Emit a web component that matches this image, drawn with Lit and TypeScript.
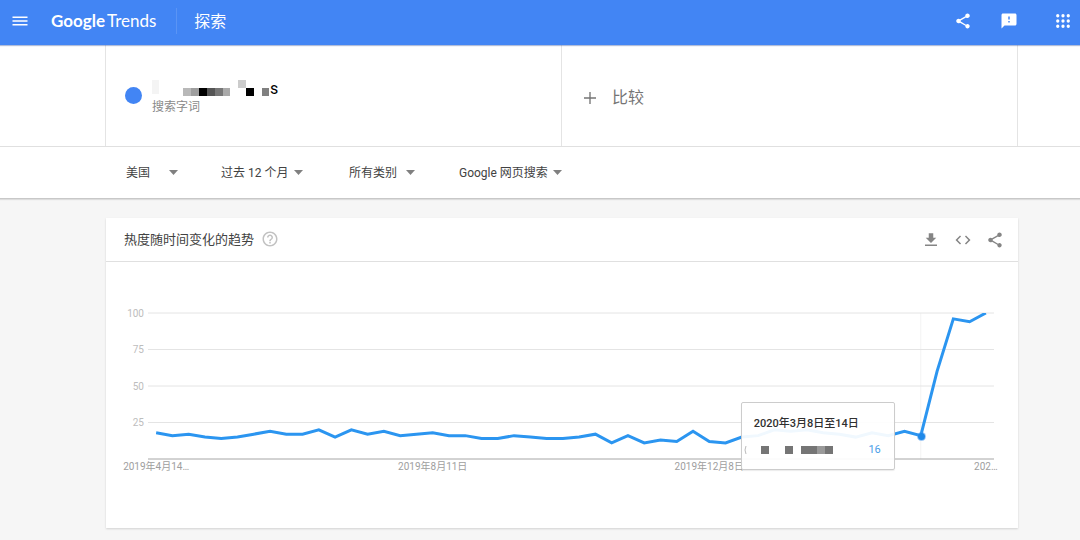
import { LitElement, html, svg, css } from "lit";
import { customElement, property, state } from "lit/decorators.js";

const VALUES = [
  18, 16, 17, 15, 14, 15, 17, 19, 17, 17, 20, 15, 20, 17, 19, 16, 17, 18, 16, 16, 14, 14, 16, 15, 14, 14,
  15, 17, 11, 16, 11, 13, 12, 19, 12, 11, 15, 16, 20, 19, 20, 18, 17, 15, 18, 16, 19, 16, 60, 96, 94, 100,
];

const TICKS = [
  { week: 0, text: "2019年4月14…" },
  { week: 17, text: "2019年8月11日" },
  { week: 34, text: "2019年12月8日" },
  { week: 51, text: "202…" },
];

const FILTERS = [
  { id: "geo", name: "地区", options: ["美国", "全球"], size: "short" },
  { id: "time", name: "时间范围", options: ["过去 12 个月", "过去 5 年"], size: "medium" },
  { id: "category", name: "类别", options: ["所有类别", "新闻"], size: "small" },
  { id: "property", name: "搜索类型", options: ["Google 网页搜索", "图片搜索"], size: "long" },
];

const dot = (x: number, y: number) => `M${x - 2.2} ${y}a2.2 2.2 0 1 0 4.4 0a2.2 2.2 0 1 0-4.4 0z`;

const ICONS: Record<string, string> = {
  menu: "M2 18h20v-2H2v2zm0-5h20v-2H2v2zm0-7v2h20V6H2z",
  share:
    "M18 16.08c-.76 0-1.44.3-1.96.77L8.91 12.7c.05-.23.09-.46.09-.7s-.04-.47-.09-.7l7.05-4.11c.54.5 1.25.81 2.04.81 1.66 0 3-1.34 3-3s-1.34-3-3-3-3 1.34-3 3c0 .24.04.47.09.7L8.04 9.81C7.5 9.31 6.79 9 6 9c-1.66 0-3 1.34-3 3s1.34 3 3 3c.79 0 1.5-.31 2.04-.81l7.12 4.16c-.05.21-.08.43-.08.65 0 1.61 1.31 2.92 2.92 2.92s2.92-1.31 2.92-2.92-1.31-2.92-2.92-2.92z",
  feedback: "M20 2H4c-1.1 0-1.99.9-1.99 2L2 22l4-4h14c1.1 0 2-.9 2-2V4c0-1.1-.9-2-2-2zm-7 12h-2v-2h2v2zm0-4h-2V6h2v4z",
  apps: [5, 12, 19].flatMap((y) => [5, 12, 19].map((x) => dot(x, y))).join(""),
  plus: "M20 12.9h-7.1V20h-1.8v-7.1H4v-1.8h7.1V4h1.8v7.1H20z",
  download: "M19 9h-4V3H9v6H5l7 7 7-7zM4 18v2h16v-2H4z",
  code: "M9.4 16.6L4.8 12l4.6-4.6L8 6l-6 6 6 6 1.4-1.4zm5.2 0l4.6-4.6-4.6-4.6L16 6l6 6-6 6-1.4-1.4z",
  help: "M11 18h2v-2h-2v2zm1-16C6.48 2 2 6.48 2 12s4.48 10 10 10 10-4.48 10-10S17.52 2 12 2zm0 18c-4.41 0-8-3.59-8-8s3.59-8 8-8 8 3.59 8 8-3.59 8-8 8zm0-14c-2.21 0-4 1.79-4 4h2c0-1.1.9-2 2-2s2 .9 2 2c0 2-3 1.75-3 5h2c0-2.25 3-2.5 3-5 0-2.21-1.79-4-4-4z",
};

@customElement("ui-icon")
class UiIcon extends LitElement {
  @property() name = "";

  static styles = css`
    :host { display: block; width: 18px; height: 18px; }
    svg { display: block; width: 100%; height: 100%; fill: currentColor; }
  `;

  render() {
    return html`<svg viewBox="0 0 24 24" aria-hidden="true"><path d=${ICONS[this.name] ?? ""}></path></svg>`;
  }
}

@customElement("trend-chart")
class TrendChart extends LitElement {
  @state() private active = 47;

  static styles = css`
    :host { display: block; }
    .chart { display: grid; grid-template-columns: 24px minmax(0, 1fr); column-gap: 4px; }
    .scale {
      display: flex; flex-direction: column; justify-content: space-between;
      margin: -5px 0 30px;
      font-size: 10px; line-height: 12px; color: #bdbdbd; text-align: right;
    }
    .plot { position: relative; height: 146px; }
    svg { display: block; width: 100%; height: 100%; }
    .lines { overflow: visible; }
    .lines line { stroke: #e4e4e4; stroke-width: 1; shape-rendering: crispEdges; vector-effect: non-scaling-stroke; }
    .lines .base { stroke: #a6a6a6; }
    .lines .week { stroke: #f3f3f3; }
    .curve { position: absolute; inset: 0; }
    .curve polyline { fill: none; stroke: #2b95f0; stroke-width: 3; vector-effect: non-scaling-stroke; }
    .anchor { position: absolute; width: 0; height: 0; }
    .dot {
      position: absolute; left: -3px; top: -3px; width: 7px; height: 7px;
      border-radius: 50%; background: #2089e8; box-shadow: 0 0 0 1px rgba(66, 150, 240, 0.5);
    }
    .tip {
      position: absolute; right: 26px; top: -34px; width: 154px; height: 68px;
      box-sizing: border-box; padding: 13px 13px 0 12px;
      border: 1px solid #ccc; border-radius: 2px;
      background: rgba(255, 255, 255, 0.93); box-shadow: 0 1px 1px rgba(0, 0, 0, 0.08);
    }
    .date { font-size: 11px; line-height: 16px; font-weight: 500; color: #303030; white-space: nowrap; }
    .row { display: flex; align-items: center; justify-content: space-between; margin: 10px 0 0 -11px; }
    .row svg { width: 92px; height: 12px; }
    .value { font-size: 11px; line-height: 16px; color: #4a9de8; }
    .weeks {
      grid-column: 2; display: grid; grid-template-columns: repeat(52, minmax(0, 1fr));
      padding-top: 1px; font-size: 10px; line-height: 14px; color: #9e9e9e;
    }
    .weeks span { grid-row: 1; justify-self: center; white-space: nowrap; }
  `;

  render() {
    const points = VALUES.map((v, i) => `${i + 0.5},${100 - v}`).join(" ");
    const x = this.active + 0.5;
    return html`
      <div class="chart">
        <div class="scale"><span>100</span><span>75</span><span>50</span><span>25</span></div>
        <div class="plot">
          <svg class="lines" viewBox="0 0 52 100" preserveAspectRatio="none" aria-hidden="true">
            <line class="week" x1=${x} x2=${x} y1="0" y2="100"></line>
            ${[0, 25, 50, 75].map((y) => svg`<line x1="0" x2="52" y1=${y} y2=${y}></line>`)}
            <line class="base" x1="0" x2="52" y1="100" y2="100"></line>
          </svg>
          <svg class="curve" viewBox="0 0 52 100" preserveAspectRatio="none" role="img" aria-label="热度随时间变化的趋势">
            <polyline points=${points}></polyline>
          </svg>
          <div class="anchor" style="left:${(x / 52) * 100}%;top:${100 - VALUES[this.active]}%">
            <div class="dot"></div>
            <div class="tip">
              <div class="date">2020年3月8日至14日</div>
              <div class="row">
                <svg viewBox="0 0 92 12" aria-hidden="true">
                  <path d="M3 2Q1 6 3 10" fill="none" stroke="#bbb"></path>
                  <path d="M18 2h8v8h-8zM42 2h8v8h-8zM58 2h16v8h-16zM82 2h8v8h-8z" fill="#757575"></path>
                  <path d="M74 2h8v8h-8z" fill="#999"></path>
                </svg>
                <span class="value">${VALUES[this.active]}</span>
              </div>
            </div>
          </div>
        </div>
        <div class="weeks">
          ${TICKS.map((t) => html`<span style="grid-column:${t.week + 1}">${t.text}</span>`)}
        </div>
      </div>
    `;
  }
}

@customElement("app-root")
class AppRoot extends LitElement {
  static styles = css`
    :host {
      display: block; min-height: 100vh; background: #f6f6f6; color: #424242;
      font-family: Roboto, "Noto Sans CJK SC", sans-serif;
    }
    button, select { margin: 0; padding: 0; border: 0; background: none; font: inherit; color: inherit; cursor: pointer; }
    button { display: block; }
    .bar {
      position: relative; display: flex; align-items: center; height: 45px; box-sizing: border-box;
      padding: 0 8px 3px 11px; background: #4285f4; color: #fff; box-shadow: 0 1px 1px rgba(60, 90, 160, 0.4);
    }
    .logo {
      margin-left: 22px; padding-right: 20px; border-right: 1px solid #5a94f5;
      font: 400 17px/26px Lato, sans-serif; color: #fff; text-decoration: none; white-space: nowrap;
    }
    .logo b { font-weight: 700; margin-right: 2px; }
    .title { flex: 1; margin: 2px 0 0 17px; font-size: 16px; line-height: 24px; font-weight: 400; }
    .tools { display: flex; align-items: center; gap: 28px; }
    .tools .grid { margin-left: 8px; }
    .white { background: #fff; }
    .inner { margin: 0 62px 0 105px; }
    .terms { border-bottom: 1px solid #e0e0e0; }
    .terms .inner { display: grid; grid-template-columns: 1fr 1fr; height: 101px; border-right: 1px solid #e4e4e4; }
    .cell { display: flex; align-items: center; border-left: 1px solid #e4e4e4; }
    .term { gap: 10px; padding-left: 19px; }
    .bullet { width: 17px; height: 17px; border-radius: 50%; background: #4285f4; }
    .word { padding-top: 4px; }
    .name { display: flex; align-items: flex-start; height: 18px; font-size: 16px; line-height: 18px; color: #000; }
    .name svg { display: block; width: 118px; height: 17px; }
    .kind { font-size: 12px; line-height: 18px; color: #8a8a8a; }
    .compare { display: flex; align-items: center; gap: 13px; padding: 4px 0 0 19px; font-size: 16px; line-height: 24px; color: #757575; }
    .filters { border-bottom: 1px solid #c8c8c8; box-shadow: 0 1px 1px rgba(0, 0, 0, 0.1); }
    .filters .inner { display: flex; align-items: center; gap: 42px; height: 51px; padding-left: 21px; }
    .filter { display: grid; align-items: center; font-size: 12px; line-height: 18px; }
    .filter select { grid-area: 1 / 1; width: 100%; appearance: none; }
    .filter svg { grid-area: 1 / 1; justify-self: end; width: 9px; height: 5px; fill: #808080; pointer-events: none; }
    .short { width: 52px; }
    .medium { width: 82px; margin-left: 1px; }
    .small { width: 66px; margin-left: 4px; }
    .long { width: 103px; margin-left: 2px; }
    .card { margin: 19px 62px 0 106px; background: #fff; box-shadow: 0 1px 2px rgba(0, 0, 0, 0.15); }
    .head { display: flex; align-items: center; height: 43px; padding: 0 14px 0 18px; border-bottom: 1px solid #e0e0e0; }
    .head h2 { margin: 0; font-size: 13px; line-height: 20px; font-weight: 400; }
    .help { margin: 0 0 2px 7px; color: #c2c2c2; }
    .actions { display: flex; gap: 14px; margin-left: auto; color: #858585; }
    trend-chart { padding: 51px 24px 54px 14px; }
  `;

  render() {
    return html`
      <header class="bar">
        <button aria-label="菜单"><ui-icon name="menu"></ui-icon></button>
        <a class="logo" href="#"><b>Google</b>Trends</a>
        <h1 class="title">探索</h1>
        <div class="tools">
          <button aria-label="分享"><ui-icon name="share"></ui-icon></button>
          <button aria-label="反馈"><ui-icon name="feedback"></ui-icon></button>
          <button class="grid" aria-label="应用"><ui-icon name="apps"></ui-icon></button>
        </div>
      </header>
      <section class="white terms">
        <div class="inner">
          <div class="cell term">
            <span class="bullet"></span>
            <div class="word">
              <div class="name">
                <svg viewBox="0 0 118 17" aria-hidden="true">
                  <path fill="#f4f4f4" d="M0 0h7v14H0z"></path>
                  <path fill="#b8b8b8" d="M31 8h8v8h-8z"></path>
                  <path fill="#9e9e9e" d="M39 8h8v8h-8z"></path>
                  <path fill="#000" d="M47 8h8v8h-8zM94 8h8v8h-8z"></path>
                  <path fill="#555" d="M55 8h8v8h-8z"></path>
                  <path fill="#777" d="M63 8h8v8h-8z"></path>
                  <path fill="#aaa" d="M71 8h7v8h-7z"></path>
                  <path fill="#ccc" d="M86 0h8v8h-8z"></path>
                  <path fill="#808080" d="M110 8h7v8h-7z"></path>
                </svg><span>s</span>
              </div>
              <div class="kind">搜索字词</div>
            </div>
          </div>
          <div class="cell">
            <button class="compare"><ui-icon name="plus"></ui-icon>比较</button>
          </div>
        </div>
      </section>
      <section class="white filters">
        <div class="inner">
          ${FILTERS.map(
            (f) => html`<div class="filter ${f.size}">
              <select id=${f.id} aria-label=${f.name}>
                ${f.options.map((o) => html`<option>${o}</option>`)}
              </select>
              <svg viewBox="0 0 9 5" aria-hidden="true"><path d="M0 0h9L4.5 5z"></path></svg>
            </div>`
          )}
        </div>
      </section>
      <main class="card">
        <div class="head">
          <h2>热度随时间变化的趋势</h2>
          <button class="help" aria-label="帮助"><ui-icon name="help"></ui-icon></button>
          <div class="actions">
            <button aria-label="下载"><ui-icon name="download"></ui-icon></button>
            <button aria-label="嵌入"><ui-icon name="code"></ui-icon></button>
            <button aria-label="分享"><ui-icon name="share"></ui-icon></button>
          </div>
        </div>
        <trend-chart></trend-chart>
      </main>
    `;
  }
}
